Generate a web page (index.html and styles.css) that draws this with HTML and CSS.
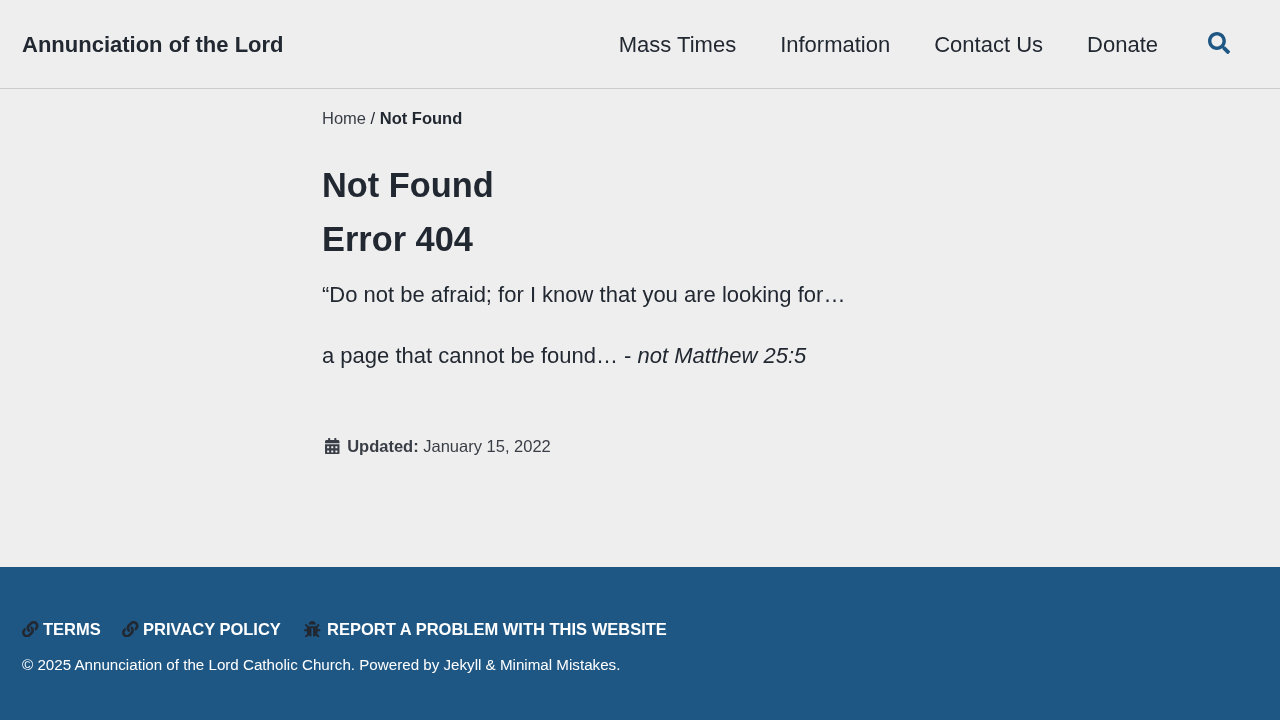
FILE: index.html
```html
<!DOCTYPE html>
<html lang="en">
<head>
<meta charset="utf-8">
<title>Not Found - Annunciation of the Lord</title>
<link rel="stylesheet" href="styles.css">
</head>
<body>
<header class="masthead">
  <a class="site-title">Annunciation of the Lord</a>
  <nav class="nav">
    <a>Mass Times</a><a>Information</a><a>Contact Us</a><a>Donate</a>
  </nav>
  <button class="search" aria-label="Search"><svg viewBox="0 0 512 512"><path d="M505 442.700L405.300 343c-4.500-4.500-10.600-7-17-7H372c27.600-35.300 44-79.700 44-128C416 93.100 322.900 0 208 0S0 93.100 0 208s93.100 208 208 208c48.300 0 92.700-16.400 128-44v16.300c0 6.400 2.500 12.500 7 17l99.700 99.700c9.400 9.400 24.600 9.400 33.900 0l28.300-28.300c9.400-9.400 9.400-24.600.1-34zM208 336c-70.700 0-128-57.200-128-128 0-70.700 57.200-128 128-128 70.700 0 128 57.200 128 128 0 70.700-57.200 128-128 128z"/></svg></button>
</header>
<main class="main">
  <nav class="crumbs"><a>Home</a> / <strong>Not Found</strong></nav>
  <h1>Not Found</h1>
  <h2>Error 404</h2>
  <p>“Do not be afraid; for I know that you are looking for…</p>
  <p>a page that cannot be found… - <em>not Matthew 25:5</em></p>
  <div class="updated"><svg viewBox="0 0 448 512"><path fill-rule="evenodd" d="M0 464c0 26.500 21.500 48 48 48h352c26.500 0 48-21.500 48-48V192H0v272zm320-196c0-6.600 5.400-12 12-12h40c6.600 0 12 5.400 12 12v40c0 6.600-5.400 12-12 12h-40c-6.600 0-12-5.400-12-12v-40zm0 128c0-6.600 5.400-12 12-12h40c6.600 0 12 5.400 12 12v40c0 6.600-5.400 12-12 12h-40c-6.600 0-12-5.400-12-12v-40zM192 268c0-6.600 5.400-12 12-12h40c6.600 0 12 5.400 12 12v40c0 6.600-5.400 12-12 12h-40c-6.600 0-12-5.400-12-12v-40zm0 128c0-6.600 5.400-12 12-12h40c6.600 0 12 5.400 12 12v40c0 6.600-5.400 12-12 12h-40c-6.600 0-12-5.400-12-12v-40zM64 268c0-6.600 5.400-12 12-12h40c6.600 0 12 5.400 12 12v40c0 6.600-5.400 12-12 12H76c-6.600 0-12-5.400-12-12v-40zm0 128c0-6.600 5.400-12 12-12h40c6.600 0 12 5.400 12 12v40c0 6.600-5.400 12-12 12H76c-6.600 0-12-5.400-12-12v-40zM400 64h-48V16c0-8.800-7.200-16-16-16h-32c-8.800 0-16 7.200-16 16v48H160V16c0-8.800-7.200-16-16-16h-32c-8.800 0-16 7.200-16 16v48H48C21.500 64 0 85.500 0 112v48h448v-48c0-26.500-21.500-48-48-48z"/></svg><span><strong>Updated:</strong> January 15, 2022</span></div>
</main>
<footer class="footer">
  <ul class="links">
    <li><svg viewBox="0 0 512 512"><path d="M326.612 185.391c59.747 59.809 58.927 155.698.36 214.590-.11.120-.240.250-.360.370l-67.200 67.200c-59.270 59.270-155.699 59.262-214.960 0-59.270-59.260-59.270-155.700 0-214.960l37.106-37.106c9.840-9.840 26.786-3.300 27.294 10.606.648 17.722 3.826 35.527 9.690 52.721 1.986 5.822.567 12.262-3.783 16.612l-13.087 13.087c-28.026 28.026-28.905 73.660-1.155 101.960 28.024 28.579 74.086 28.749 102.325.510l67.200-67.190c28.191-28.191 28.073-73.757 0-101.830-3.701-3.694-7.429-6.564-10.341-8.569a16.037 16.037 0 0 1-6.947-12.606c-.396-10.567 3.348-21.456 11.698-29.806l21.054-21.055c5.521-5.521 14.182-6.199 20.584-1.731a152.482 152.482 0 0 1 20.522 17.197zM467.547 44.449c-59.261-59.262-155.690-59.270-214.960 0l-67.200 67.200c-.120.120-.250.250-.360.370-58.566 58.892-59.387 154.781.360 214.590a152.454 152.454 0 0 0 20.521 17.196c6.402 4.468 15.064 3.789 20.584-1.731l21.054-21.055c8.350-8.350 12.094-19.239 11.698-29.806a16.037 16.037 0 0 0-6.947-12.606c-2.912-2.005-6.640-4.875-10.341-8.569-28.073-28.073-28.191-73.639 0-101.830l67.200-67.190c28.239-28.239 74.300-28.069 102.325.510 27.750 28.300 26.872 73.934-1.155 101.960l-13.087 13.087c-4.350 4.350-5.769 10.790-3.783 16.612 5.864 17.194 9.042 34.999 9.690 52.721.509 13.906 17.454 20.446 27.294 10.606l37.106-37.106c59.271-59.259 59.271-155.699.001-214.959z"/></svg><a>Terms</a></li>
    <li><svg viewBox="0 0 512 512"><path d="M326.612 185.391c59.747 59.809 58.927 155.698.36 214.590-.11.120-.240.250-.360.370l-67.200 67.200c-59.270 59.270-155.699 59.262-214.960 0-59.270-59.260-59.270-155.700 0-214.960l37.106-37.106c9.840-9.840 26.786-3.300 27.294 10.606.648 17.722 3.826 35.527 9.690 52.721 1.986 5.822.567 12.262-3.783 16.612l-13.087 13.087c-28.026 28.026-28.905 73.660-1.155 101.960 28.024 28.579 74.086 28.749 102.325.510l67.200-67.190c28.191-28.191 28.073-73.757 0-101.830-3.701-3.694-7.429-6.564-10.341-8.569a16.037 16.037 0 0 1-6.947-12.606c-.396-10.567 3.348-21.456 11.698-29.806l21.054-21.055c5.521-5.521 14.182-6.199 20.584-1.731a152.482 152.482 0 0 1 20.522 17.197zM467.547 44.449c-59.261-59.262-155.690-59.270-214.960 0l-67.200 67.200c-.120.120-.250.250-.360.370-58.566 58.892-59.387 154.781.360 214.590a152.454 152.454 0 0 0 20.521 17.196c6.402 4.468 15.064 3.789 20.584-1.731l21.054-21.055c8.350-8.350 12.094-19.239 11.698-29.806a16.037 16.037 0 0 0-6.947-12.606c-2.912-2.005-6.640-4.875-10.341-8.569-28.073-28.073-28.191-73.639 0-101.830l67.200-67.190c28.239-28.239 74.300-28.069 102.325.510 27.750 28.300 26.872 73.934-1.155 101.960l-13.087 13.087c-4.350 4.350-5.769 10.790-3.783 16.612 5.864 17.194 9.042 34.999 9.690 52.721.509 13.906 17.454 20.446 27.294 10.606l37.106-37.106c59.271-59.259 59.271-155.699.001-214.959z"/></svg><a>Privacy Policy</a></li>
    <li class="report"><svg viewBox="0 0 512 512"><path d="M511.988 288.900c-.478 17.430-15.217 31.100-32.653 31.100H424v16c0 21.864-4.882 42.584-13.600 61.145l60.228 60.228c12.496 12.497 12.496 32.758 0 45.255-12.498 12.497-32.759 12.496-45.256 0l-54.736-54.736C345.886 467.965 314.351 480 280 480V236c0-6.627-5.373-12-12-12h-24c-6.627 0-12 5.373-12 12v244c-34.351 0-65.886-12.035-90.636-32.108l-54.736 54.736c-12.498 12.497-32.759 12.496-45.256 0-12.496-12.497-12.496-32.758 0-45.255l60.228-60.228C92.882 378.584 88 357.864 88 336v-16H32.666C15.230 320 .491 306.330.013 288.900-.484 270.816 14.028 256 32 256h56v-58.745l-46.628-46.628c-12.496-12.497-12.496-32.758 0-45.255 12.498-12.497 32.758-12.497 45.256 0L141.255 160h229.489l54.627-54.627c12.498-12.497 32.758-12.497 45.256 0 12.496 12.497 12.496 32.758 0 45.255L424 197.255V256h56c17.972 0 32.484 14.816 31.988 32.900zM257 0c-61.856 0-112 50.144-112 112h224C369 50.144 318.856 0 257 0z"/></svg><a>Report a problem with this website</a></li>
  </ul>
  <div class="copyright">© 2025 Annunciation of the Lord Catholic Church. Powered by <a>Jekyll</a> &amp; <a>Minimal Mistakes</a>.</div>
</footer>
</body>
</html>
```
FILE: styles.css
```css
* { box-sizing: border-box; }
body {
  margin: 0;
  min-height: 720px;
  display: flex;
  flex-direction: column;
  background: #eee;
  color: #222831;
  font: 22px/33px "Liberation Sans", Arial, sans-serif;
}
svg { display: block; fill: currentColor; flex: none; }
.masthead, .main, .footer { will-change: transform; }
.masthead {
  height: 89px;
  padding: 0 50px 0 22px;
  display: flex;
  align-items: center;
  border-bottom: 1px solid #ccc;
}
.site-title { font-weight: bold; margin-right: auto; }
.nav { display: flex; gap: 44px; }
.search { margin: 0 0 3px 50px; padding: 0; border: 0; background: none; color: #1f5784; }
.search svg { width: 22px; height: 22px; }
.main { flex: 1; padding: 17px 22px 0 322px; }
.crumbs { font-size: 16.5px; line-height: 25px; }
.crumbs a { color: #393e46; }
h1, h2 { margin: 0; font-size: 34.37px; line-height: 42px; }
h1 { margin-top: 33px; }
h2 { margin-top: 12px; }
p { margin: 0 0 28px; }
h2 + p { margin-top: 18px; }
.updated {
  display: flex;
  align-items: center;
  gap: 7.7px;
  margin-top: 62px;
  padding-left: 3px;
  color: #393e46;
  font-size: 16.5px;
  line-height: 25px;
}
.updated svg { width: 14.5px; height: 16.5px; margin-bottom: 1px; }
.footer { height: 153px; padding: 50px 22px 0; background: #1f5784; color: #fff; }
.links {
  display: flex;
  gap: 21.3px;
  margin: 0;
  padding: 0;
  list-style: none;
  font-size: 16.5px;
  font-weight: bold;
  line-height: 25px;
  text-transform: uppercase;
}
.links li { display: flex; align-items: center; gap: 4.5px; }
.links svg { width: 16.5px; height: 16.5px; margin-bottom: 1px; color: #222831; }
.links .report { gap: 6.4px; padding-left: 2px; }
.copyright { margin-top: 11px; font-size: 15.16px; line-height: 24px; }
```
